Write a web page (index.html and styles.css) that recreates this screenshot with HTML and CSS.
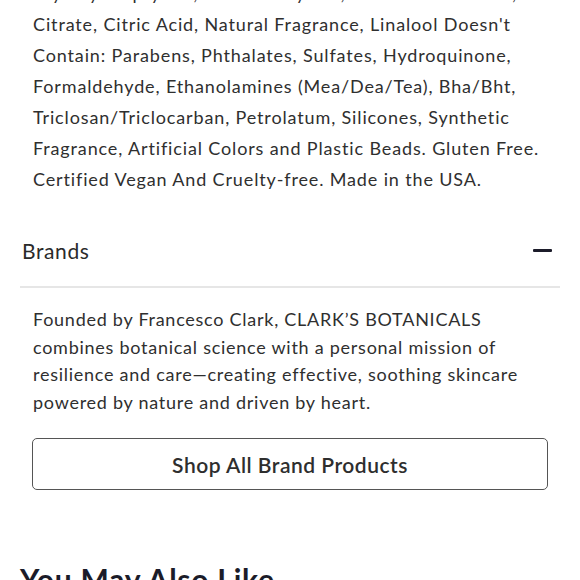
FILE: index.html
```html
<!DOCTYPE html>
<html lang="en">
<head>
<meta charset="utf-8">
<title>Product details</title>
<link rel="stylesheet" href="styles.css">
</head>
<body>
<main class="page">
  <div class="ingredients">
    Glyceryl Caprylate, Sodium Phytate, Potassium Sorbate, Sodium<br>
    Citrate, Citric Acid, Natural Fragrance, Linalool Doesn't<br>
    Contain: Parabens, Phthalates, Sulfates, Hydroquinone,<br>
    Formaldehyde, Ethanolamines (Mea/Dea/Tea), Bha/Bht,<br>
    Triclosan/Triclocarban, Petrolatum, Silicones, Synthetic<br>
    Fragrance, Artificial Colors and Plastic Beads. Gluten Free.<br>
    Certified Vegan And Cruelty-free. Made in the USA.
  </div>

  <section class="accordion">
    <div class="acc-head">
      <span class="acc-title">Brands</span>
      <span class="acc-minus"></span>
    </div>
    <div class="acc-body">
      <p class="brand-text">Founded by Francesco Clark, CLARK’S BOTANICALS<br>
      combines botanical science with a personal mission of<br>
      resilience and care—creating effective, soothing skincare<br>
      powered by nature and driven by heart.</p>
      <a class="shop-btn" href="#">Shop All Brand Products</a>
    </div>
  </section>

  <h2 class="also-like">You May Also Like</h2>
</main>
</body>
</html>
```

FILE: styles.css
```css
html, body {
  margin: 0;
  padding: 0;
  background: #ffffff;
}

body {
  font-family: "Lato", "Noto Sans", sans-serif;
  color: #2f2f2f;
  overflow: hidden;
}

.page {
  padding: 0 20px;
}

.ingredients {
  margin-top: -22px;
  padding: 0 12px 0 13px;
  font-size: 18px;
  letter-spacing: 0.86px;
  line-height: 31px;
  white-space: nowrap;
}

.accordion {
  margin-top: 24px;
}

.acc-head {
  box-sizing: border-box;
  display: flex;
  align-items: center;
  justify-content: space-between;
  height: 69px;
  padding: 0 8px 5px 2px;
  border-bottom: 2px solid #e6e6e6;
}

.acc-title {
  font-size: 21px;
  letter-spacing: 0.6px;
  color: #2a2a2a;
}

.acc-minus {
  width: 19px;
  height: 3px;
  background: #1c1c2a;
  border-radius: 1px;
}

.acc-body {
  padding: 18px 12px 0 12px;
}

.brand-text {
  margin: 0;
  padding-left: 1px;
  font-size: 18px;
  letter-spacing: 0.74px;
  line-height: 27.5px;
  white-space: nowrap;
}

.shop-btn {
  box-sizing: border-box;
  display: flex;
  align-items: center;
  justify-content: center;
  margin-top: 22px;
  height: 52px;
  border: 1px solid #555555;
  border-radius: 5px;
  font-size: 21px;
  font-weight: 600;
  letter-spacing: 0.5px;
  color: #2e2e2e;
  text-decoration: none;
}

.also-like {
  margin: 71px 0 0 0;
  font-size: 30px;
  font-weight: 700;
  letter-spacing: 0.75px;
  color: #1b1c29;
  line-height: 36px;
}
```
